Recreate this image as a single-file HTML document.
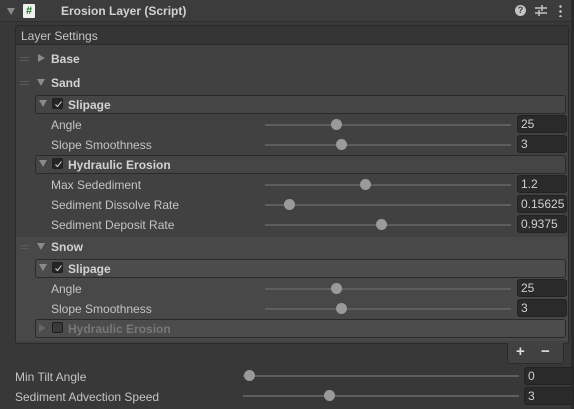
<!DOCTYPE html>
<html><head><style>
*{margin:0;padding:0;box-sizing:border-box}
body{width:574px;height:409px;background:#383838;font-family:"Liberation Sans",sans-serif;font-size:12px;color:#c4c4c4;position:relative;overflow:hidden}
.a{position:absolute}
.t{position:absolute;white-space:nowrap;line-height:14px}
.b{font-weight:bold;color:#d2d2d2}
.tri{position:absolute;width:0;height:0}
.down{border-left:4px solid transparent;border-right:4px solid transparent;border-top:7px solid #8a8a8a}
.right{border-top:4px solid transparent;border-bottom:4px solid transparent;border-left:7px solid #8a8a8a}
.h{position:absolute;width:9px;height:4px;border-top:1px solid #5a5a5a;border-bottom:1px solid #5a5a5a}
.box{position:absolute;border:1px solid #2a2a2a;border-radius:3px;background:#454545}
.cb{position:absolute;width:11px;height:11px;background:#252525;border-radius:2px;border:1px solid #1e1e1e}
.cb svg{position:absolute;left:1px;top:1px}
.tr{position:absolute;height:2px;background:#5e5e5e}
.k{position:absolute;width:11px;height:11px;border-radius:50%;background:#9a9a9a}
.v{position:absolute;width:50px;height:18px;background:#2a2a2a;border:1px solid #222;border-radius:3px;padding-left:3px;line-height:16px;color:#d0d0d0}
</style></head><body>
<div class="a" style="left:0;top:0;width:574px;height:22px;background:#3c3c3c;border-bottom:1px solid #2e2e2e"></div>
<div class="tri down" style="left:7px;top:8px"></div>
<div class="a" style="left:23px;top:4px;width:12px;height:14px;background:#f0f0f0;border-radius:1px;color:#1c7a2a;font-size:11px;font-weight:bold;text-align:center;line-height:14px">#</div>
<div class="t b" style="left:61px;top:4px">Erosion Layer (Script)</div>
<div class="a" style="left:515px;top:5px;width:11px;height:11px;border-radius:50%;background:#c4c4c4;color:#3c3c3c;font-size:9px;font-weight:bold;text-align:center;line-height:11px">?</div>
<svg class="a" style="left:534px;top:4px" width="14" height="13"><path d="M1 4h12M1 9h12M8 1v6M5 6v6" stroke="#c4c4c4" stroke-width="1.5"/></svg>
<div class="a" style="left:559px;top:4px;width:3px;height:13px;background:radial-gradient(circle,#c4c4c4 1.2px,transparent 1.4px) 0 0/3px 5px"></div>
<div class="a" style="left:571px;top:0;width:3px;height:409px;background:#2a2a2a"></div>

<div class="a" style="left:15px;top:25px;width:554px;height:319px;background:#414141;border:1px solid #2a2a2a;border-radius:3px"></div>
<div class="a" style="left:15px;top:25px;width:554px;height:20px;background:#353535;border:1px solid #2a2a2a;border-radius:3px 3px 0 0"></div>
<div class="t" style="left:21px;top:29px">Layer Settings</div>

<div class="h" style="left:20px;top:57px"></div><div class="tri right" style="left:38px;top:54px"></div><div class="t b" style="left:51px;top:52px">Base</div>
<div class="h" style="left:20px;top:81px"></div><div class="tri down" style="left:37px;top:79px"></div><div class="t b" style="left:51px;top:76px">Sand</div>

<div class="box" style="left:35px;top:95px;width:531px;height:19px"></div>
<div class="tri down" style="left:39px;top:100px"></div><div class="cb" style="left:52px;top:98px"><svg width="9" height="9"><path d="M1.5 4.5l2 2 4-5" stroke="#ddd" stroke-width="1" fill="none"/></svg></div><div class="t b" style="left:68px;top:98px">Slipage</div>
<div class="t" style="left:51px;top:118px">Angle</div><div class="tr" style="left:265px;top:124px;width:246px"></div><div class="k" style="left:331px;top:119px"></div><div class="v" style="left:517px;top:115px">25</div>
<div class="t" style="left:51px;top:138px">Slope Smoothness</div><div class="tr" style="left:265px;top:144px;width:246px"></div><div class="k" style="left:336px;top:139px"></div><div class="v" style="left:517px;top:135px">3</div>

<div class="box" style="left:35px;top:155px;width:531px;height:19px"></div>
<div class="tri down" style="left:39px;top:160px"></div><div class="cb" style="left:52px;top:158px"><svg width="9" height="9"><path d="M1.5 4.5l2 2 4-5" stroke="#ddd" stroke-width="1" fill="none"/></svg></div><div class="t b" style="left:68px;top:158px">Hydraulic Erosion</div>
<div class="t" style="left:51px;top:178px">Max Sedediment</div><div class="tr" style="left:265px;top:184px;width:246px"></div><div class="k" style="left:360px;top:179px"></div><div class="v" style="left:517px;top:175px">1.2</div>
<div class="t" style="left:51px;top:198px">Sediment Dissolve Rate</div><div class="tr" style="left:265px;top:204px;width:246px"></div><div class="k" style="left:284px;top:199px"></div><div class="v" style="left:517px;top:195px">0.15625</div>
<div class="t" style="left:51px;top:218px">Sediment Deposit Rate</div><div class="tr" style="left:265px;top:224px;width:246px"></div><div class="k" style="left:376px;top:219px"></div><div class="v" style="left:517px;top:215px">0.9375</div>

<div class="a" style="left:16px;top:237px;width:552px;height:104px;background:#484848"></div>
<div class="h" style="left:20px;top:245px"></div><div class="tri down" style="left:37px;top:243px"></div><div class="t b" style="left:51px;top:240px">Snow</div>
<div class="box" style="left:35px;top:259px;width:531px;height:19px;background:#4c4c4c"></div>
<div class="tri down" style="left:39px;top:264px"></div><div class="cb" style="left:52px;top:262px"><svg width="9" height="9"><path d="M1.5 4.5l2 2 4-5" stroke="#ddd" stroke-width="1" fill="none"/></svg></div><div class="t b" style="left:68px;top:262px">Slipage</div>
<div class="t" style="left:51px;top:282px">Angle</div><div class="tr" style="left:265px;top:288px;width:246px"></div><div class="k" style="left:331px;top:283px"></div><div class="v" style="left:517px;top:279px">25</div>
<div class="t" style="left:51px;top:302px">Slope Smoothness</div><div class="tr" style="left:265px;top:308px;width:246px"></div><div class="k" style="left:336px;top:303px"></div><div class="v" style="left:517px;top:299px">3</div>
<div class="box" style="left:35px;top:319px;width:531px;height:19px;background:#4c4c4c"></div>
<div class="tri right" style="left:39px;top:324px;border-left-color:#666"></div><div class="cb" style="left:52px;top:322px;background:#3a3a3a"></div><div class="t b" style="left:68px;top:322px;color:#777">Hydraulic Erosion</div>

<div class="a" style="left:507px;top:343px;width:57px;height:21px;background:#414141;border:1px solid #2a2a2a;border-top:none;border-radius:0 0 3px 3px"></div>
<div class="t b" style="left:516px;top:345px;font-size:15px;color:#ddd">+</div>
<div class="t b" style="left:541px;top:345px;font-size:15px;color:#ddd">−</div>

<div class="t" style="left:15px;top:370px">Min Tilt Angle</div><div class="tr" style="left:243px;top:375px;width:276px"></div><div class="k" style="left:244px;top:370px"></div><div class="v" style="left:524px;top:367px">0</div>
<div class="t" style="left:15px;top:390px">Sediment Advection Speed</div><div class="tr" style="left:243px;top:395px;width:276px"></div><div class="k" style="left:324px;top:390px"></div><div class="v" style="left:524px;top:387px">3</div>
</body></html>
